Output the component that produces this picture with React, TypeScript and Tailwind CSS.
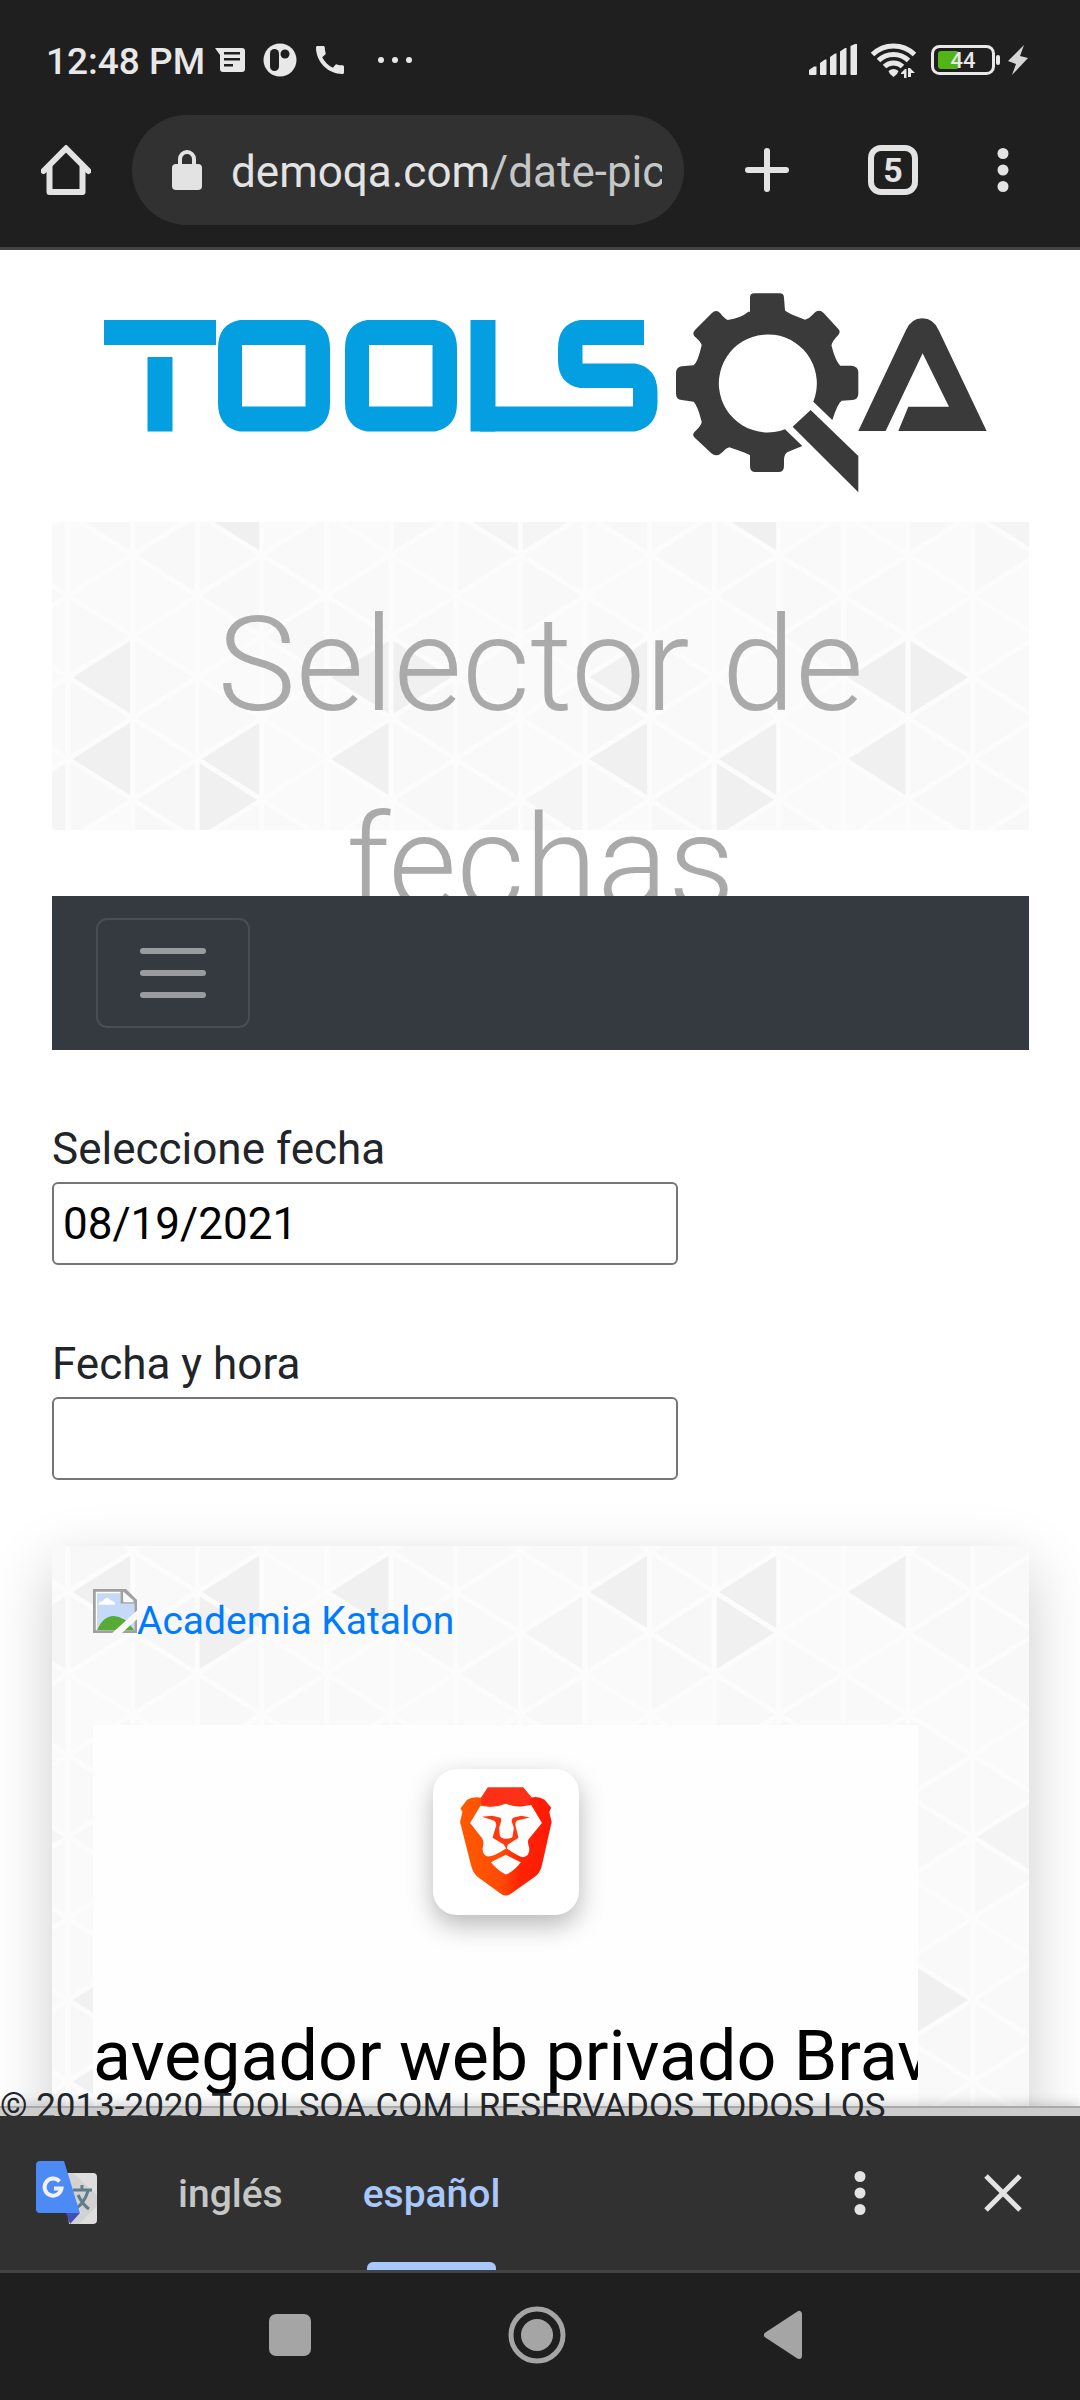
import { useId, type ReactNode } from "react";

const COL = 64.625;
const ROW = 40.8;
const COLS = 8;
const ROWS = 12;

const SHADES: Record<string, string> = {
  "0,0": "#f0f0f0",
  "2,0": "#f0f0f0",
  "4,0": "#f0f0f0",
  "2,1": "#f0f0f0",
  "7,1": "#f5f5f5",
  "1,1": "#f7f7f7",
  "2,6": "#f0f0f0",
  "6,6": "#f4f4f4",
  "7,6": "#f5f5f5",
  "4,10": "#f0f0f0",
  "5,10": "#f0f0f0",
  "0,10": "#f1f1f1",
};
const LIGHT = ["#f9f9f9", "#fafafa", "#f8f8f8", "#f9f9f9", "#fafafa"];

/** Triangle mosaic that fills its parent; `top` is where the mosaic's first row starts. */
function TriangleBackdrop({ top }: { top: number }) {
  const id = useId();
  const cells: ReactNode[] = [];
  for (let k = -1; k <= COLS; k++) {
    for (let j = -1; j <= ROWS; j++) {
      const km = (k + COLS) % COLS;
      const jm = (j + ROWS) % ROWS;
      const fill = SHADES[`${km},${jm}`] ?? LIGHT[(km * 3 + jm * 7) % 5];
      const pointsLeft = (km + jm) % 2 === 0;
      const apex = (pointsLeft ? k : k + 1) * COL;
      const base = (pointsLeft ? k + 1 : k) * COL;
      cells.push(
        <polygon
          key={`${k},${j}`}
          points={`${apex},${j * ROW} ${base},${(j - 1) * ROW} ${base},${(j + 1) * ROW}`}
          fill={fill}
          stroke="#fcfcfc"
          strokeWidth="5"
        />,
      );
    }
  }
  return (
    <svg className="absolute inset-0 h-full w-full" aria-hidden="true">
      <defs>
        <pattern id={id} x="16" y={top} width={COL * COLS} height={ROW * ROWS} patternUnits="userSpaceOnUse">
          {cells}
        </pattern>
      </defs>
      <rect width="100%" height="100%" fill={`url(#${id})`} />
    </svg>
  );
}

function StatusBar() {
  return (
    <div className="flex h-[100px] items-center justify-between pt-5 pr-[52px] pl-[46px] text-[#e8e8e8]">
      <div className="flex items-center">
        <span className="mr-[10px] pt-1 text-[37px] leading-[40px] font-medium">12:48 PM</span>
        <svg className="mr-[18px] h-[26px] w-[30px]" viewBox="0 0 30 26" fill="currentColor" aria-hidden="true">
          <path
            fillRule="evenodd"
            d="M0 1h27q3 0 3 3v18q0 3-3 3H8q-3 0-3-3V8zM9 5v2.500h16V5zm0 6v2.500h16V11zm0 6v2.500h9V17z"
          />
        </svg>
        <svg className="mr-[19px] h-[34px] w-[34px]" viewBox="0 0 34 34" aria-hidden="true">
          <circle cx="17" cy="17" r="16.500" fill="currentColor" />
          <rect x="7" y="6" width="9" height="22" rx="4.500" fill="#1f1f1f" />
          <circle cx="22" cy="11" r="4.500" fill="#1f1f1f" />
        </svg>
        <svg className="mr-[33px] h-[28px] w-[28px]" viewBox="3 3 18 18" fill="currentColor" aria-hidden="true">
          <path d="M20.010 15.380c-1.230 0-2.420-.2-3.530-.56a.977.977 0 0 0-1.010.24l-1.570 1.970c-2.830-1.350-5.480-3.900-6.890-6.830l1.950-1.660c.27-.28.350-.67.240-1.020-.37-1.110-.56-2.300-.56-3.530 0-.54-.45-.99-.99-.99H4.190C3.650 3 3 3.240 3 3.990 3 13.280 10.730 21 20.010 21c.71 0 .99-.63.99-1.180v-3.450c0-.54-.45-.99-.99-.99z" />
        </svg>
        <svg className="h-[8px] w-[36px]" viewBox="0 0 36 8" fill="currentColor" aria-hidden="true">
          <circle cx="4" cy="4" r="3" />
          <circle cx="18" cy="4" r="3" />
          <circle cx="32" cy="4" r="3" />
        </svg>
      </div>
      <div className="flex items-center">
        <svg className="mr-[12px] h-[32px] w-[49px]" viewBox="0 0 49 32" fill="currentColor" aria-hidden="true">
          <path d="M0 26l5-3.500h2.500V30q0 1-1 1H1q-1 0-1-1zM11 19l5-3.500h1.500V30q0 1-1 1H12q-1 0-1-1zM21 13l5-3.500h1.500V30q0 1-1 1H22q-1 0-1-1zM31 7.500L36 4h1.500v26q0 1-1 1H32q-1 0-1-1zM41.500 2l4.500-2h2v30q0 1-1 1h-4.500q-1 0-1-1z" />
        </svg>
        <svg className="mr-[13px] h-[36px] w-[48px]" viewBox="0 0 48 36" fill="none" aria-hidden="true">
          <g stroke="currentColor" strokeWidth="5">
            <path d="M2.500 12.500a30 30 0 0 1 42 0" />
            <path d="M8.500 18.500a21.500 21.500 0 0 1 30 0" />
            <path d="M14.500 24.500a13 13 0 0 1 18 0" />
          </g>
          <path
            fill="currentColor"
            d="M18.500 29q5-4 10 0l-1.500 3-3.500 3-3.500-3zM31 31l4-4h1.500v9H34v-4h-3zM38 26h2l5 5h-4v4h-3z"
          />
        </svg>
        <svg className="mr-[7px] h-[32px] w-[70px]" viewBox="0 0 70 32" aria-hidden="true">
          <rect x="1.500" y="2.500" width="61" height="27" rx="7" fill="none" stroke="currentColor" strokeWidth="3" />
          <rect x="7" y="7" width="21" height="18" rx="3" fill="#52b415" />
          <rect x="65" y="11" width="4" height="10" rx="2" fill="currentColor" />
          <text x="32" y="24" textAnchor="middle" fill="currentColor" fontSize="22" fontWeight="500">
            44
          </text>
        </svg>
        <svg className="h-[30px] w-[20px]" viewBox="0 0 20 30" fill="#d6d6d6" aria-hidden="true">
          <path d="M16 0L0 16l8 3-4 11 16-17-8-2z" />
        </svg>
      </div>
    </div>
  );
}

function DotsIcon() {
  return (
    <svg className="h-[44px] w-[12px]" viewBox="0 0 12 44" fill="#e3e3e3" aria-hidden="true">
      <circle cx="6" cy="5.500" r="5.500" />
      <circle cx="6" cy="22" r="5.500" />
      <circle cx="6" cy="38.500" r="5.500" />
    </svg>
  );
}

function BrowserBar() {
  return (
    <div className="flex h-[150px] items-center border-b-[3px] border-[#444] pr-[71px] pb-[7px] pl-[41px] text-[#e3e3e3]">
      <button type="button" aria-label="Inicio" className="mr-[41px] shrink-0">
        <svg className="h-[50px] w-[50px]" viewBox="0 0 50 50" fill="none" stroke="currentColor" strokeWidth="6" strokeLinejoin="round" aria-hidden="true">
          <path d="M2.500 26L25 3.500 47.500 26" strokeLinecap="round" strokeLinejoin="miter" />
          <path d="M8.500 21v26h33V21" />
        </svg>
      </button>
      <button
        type="button"
        aria-label="Dirección de la página"
        className="flex h-[110px] min-w-0 flex-1 items-center rounded-full bg-[#313131] pr-[22px] pl-10"
      >
        <svg className="mr-[29px] h-[40px] w-[30px] shrink-0" viewBox="0 0 30 40" aria-hidden="true">
          <rect y="14" width="30" height="26" rx="4" fill="currentColor" />
          <path d="M8 15V9a7 7 0 0 1 14 0v6" fill="none" stroke="currentColor" strokeWidth="4" />
        </svg>
        <span className="min-w-0 flex-1 overflow-hidden pt-1 text-left text-[44px] leading-[60px] whitespace-nowrap">
          demoqa.com<span className="text-[#c4c7c5]">/date-picker</span>
        </span>
      </button>
      <button type="button" aria-label="Nueva pestaña" className="ml-[61px] shrink-0">
        <svg className="h-[44px] w-[44px]" viewBox="0 0 44 44" stroke="currentColor" strokeWidth="6" strokeLinecap="round" aria-hidden="true">
          <path d="M22 3v38M3 22h38" />
        </svg>
      </button>
      <button
        type="button"
        aria-label="5 pestañas"
        className="ml-[79px] flex h-[50px] w-[50px] shrink-0 items-center justify-center rounded-[13px] border-[6px] border-[#e3e3e3] text-[34px] leading-[34px] font-bold"
      >
        5
      </button>
      <button type="button" aria-label="Más opciones" className="ml-[79px] shrink-0">
        <DotsIcon />
      </button>
    </div>
  );
}

function ToolsQaLogo() {
  return (
    <svg className="block w-full" viewBox="52 250 977 272" role="img" aria-label="TOOLSQA">
      <g fill="#049fe0">
        <rect x="104" y="320" width="112" height="25" />
        <rect x="147.500" y="357" width="25" height="74.500" />
        <rect x="470.500" y="320" width="25" height="111.500" />
      </g>
      <path
        fill="#049fe0"
        fillRule="evenodd"
        d="M240 320h68q22 4 22 28v55q0 24-22 28.500h-68q-22-4-22-28.500v-55q0-24 22-28zM242 345v61.500h63.500V345zM367 320h68q22 4 22 28v55q0 24-22 28.500h-68q-22-4-22-28.500v-55q0-24 22-28zM369 345v61.500h63.500V345z"
      />
      <path
        fill="#049fe0"
        d="M644 320v25h-61.500v18.500H635q22.500 4 22.500 29v10q0 24-22.500 29H480v-25h153V388h-53q-22-4-22-28v-12q0-24 22-28z"
      />
      <g transform="translate(640 260) scale(0.3333)" fill="#3a3a3a">
        <path d="M330 155V113q0-13 13-13h76q13 0 13 13l3 38q5 8 60 28 12-2 22-14 18-22 34-6l44 48q8 8 0 18-22 22-20 34 12 46 26 58h34q20 2 20 20v64q0 18-18 19l-32 2q-12 8-28 58l-57-55A147 147 0 1 0 435 508l52 50-44 18q-10 6-11 22v20q0 18-16 18h-70q-16 0-16-18v-32q-8-6-62-24-10 2-20 14-18 18-34 4l-48-45q-12-10-2-20 22-20 21-30-12-48-24-60l-36-5q-17-2-17-19v-62q0-17 17-20l36-3q12-8 24-60 0-8-20-26-10-8 0-20l50-50q14-14 26 0 12 16 22 20 40-6 62-25zM512 450l143 138v109L458 500z" />
        <path d="M655 513L797 212q16-37 50-37t50 37l143 301H775l30-73h122l-79-160-111 233z" />
      </g>
    </svg>
  );
}

function BrokenImageIcon() {
  return (
    <svg className="h-[44px] w-[44px] shrink-0" viewBox="0 0 16 16" aria-hidden="true">
      <path d="M0 0h12l4 4v12H0z" fill="#a0a0a0" />
      <path d="M1 1h9.500L15 5v10H1z" fill="#fff" />
      <path d="M1.500 1.500H10V5h5v10H1.500z" fill="#c6d9f7" />
      <path d="M2 5.700q.4-1.400 1.500-1.200Q5 2 6.500 4.200q1.700.2 1.500 1.500z" fill="#fff" />
      <path d="M1.500 15q2-5 6-5.200 4 0 7.500 5.200z" fill="#55ab35" />
      <path d="M10.500.5v4.300h5" fill="#f5f5f5" stroke="#a0a0a0" />
      <path d="M11 1l4 3.800h-4z" fill="#f9f9f9" />
      <path d="M16 7.800L7 16h3.500L16 11z" fill="#f9f9f9" />
    </svg>
  );
}

function BraveIcon() {
  return (
    <svg className="h-[146px] w-[146px]" viewBox="98 86 437 437" aria-hidden="true">
      <defs>
        <linearGradient id="brave-fill" x1="0" x2="1">
          <stop offset="0" stopColor="#ff5a00" />
          <stop offset="0.450" stopColor="#ff4a05" />
          <stop offset="0.650" stopColor="#ff2404" />
          <stop offset="1" stopColor="#ff1a06" />
        </linearGradient>
      </defs>
      <path
        fill="url(#brave-fill)"
        d="M262 141h106l25 30q20-5 39 7l20 24-6 12 7 31-28 125q-5 25-20 37l-75 53q-14 10-28 0l-72-52q-13-13-18-33L179 245l7-31-6-10 20-26q20-10 42-6z"
      />
      <path fill="#ff3018" d="M262 141h106l25 30-14 25-63-7-40 9-34-5 0-21z" />
      <path
        fill="#fff"
        d="M240 196l28 4q24 0 48-10 24 10 46 8l30-4 32 54-40 48q-4 9 2 26 2 26-18 28-16-2-50-27-38 25-56 25-18-4-15-28 5-15-2-27l-36-45z"
      />
      <path
        fill="#fe3a10"
        d="M244 229l31-3 25 6q4 4 0 18l-4 12 2 23q2 8 18 10 20-1 20-7l4-26-6-17q-2-11 6-14l22-5 26 5-38 9q-7 4-5 16l9 36-32 20-4 14-8-14-34-20 11-36q1-12-7-16z"
      />
      <path fill="#fff" d="M316 343l45 22q-21 27-45 37-24-12-45-37z" />
    </svg>
  );
}

function TranslateIcon() {
  return (
    <svg className="h-[64px] w-[62px]" viewBox="0 0 62 64" aria-hidden="true">
      <path d="M28 12h29q4 0 4 4v43q0 4-4 4H33z" fill="#dedede" />
      <path d="M31 12l14 40-12 11h10L61 45V34L37 12z" fill="#d2d2d2" />
      <path d="M30 52h14L34 63z" fill="#4150b5" />
      <path d="M37 29h19M46 24v5M52 30q-4 13-13 18M42 34q5 10 11 14" fill="none" stroke="#607d8b" strokeWidth="3" />
      <path d="M4 0h24l16 52H4q-4 0-4-4V4q0-4 4-4z" fill="#4c8bf5" />
      <path d="M23.500 20.500a8.500 8.500 0 1 0 2 7H18" fill="none" stroke="#f1f1f1" strokeWidth="4" />
    </svg>
  );
}

function TranslateBar() {
  return (
    <div className="flex h-[157px] items-center border-b-[3px] border-[#444] bg-[#313131] pr-[71px] pl-9 text-[39px] font-medium">
      <TranslateIcon />
      <div role="tablist" className="ml-11 flex h-full flex-1">
        <button type="button" role="tab" aria-selected="false" className="h-full px-9 pt-[3px] text-[#c4c7c5]">
          inglés
        </button>
        <button type="button" role="tab" aria-selected="true" className="relative ml-2 h-full px-9 pt-[3px] text-[#a8c7fa]">
          español
          <span className="absolute inset-x-10 bottom-0 h-2 rounded-t-[6px] bg-[#a8c7fa]" />
        </button>
      </div>
      <button type="button" aria-label="Opciones de traducción" className="mr-[117px]">
        <DotsIcon />
      </button>
      <button type="button" aria-label="Cerrar" className="-mr-[14px]">
        <svg className="h-[40px] w-[40px]" viewBox="0 0 40 40" stroke="#e3e3e3" strokeWidth="5" aria-hidden="true">
          <path d="M3 3l34 34M37 3L3 37" />
        </svg>
      </button>
    </div>
  );
}

function SystemNav() {
  return (
    <nav aria-label="Sistema" className="flex h-[127px] items-center justify-center gap-[197px] bg-[#1f1f1f] pr-[9px] pb-[3px]">
      <button type="button" aria-label="Recientes">
        <span className="block h-[42px] w-[42px] rounded-[7px] bg-[#a5a5a5]" />
      </button>
      <button type="button" aria-label="Pantalla de inicio">
        <svg className="h-[58px] w-[58px]" viewBox="0 0 58 58" aria-hidden="true">
          <circle cx="29" cy="29" r="26" fill="none" stroke="#a5a5a5" strokeWidth="5" />
          <circle cx="29" cy="29" r="16" fill="#a5a5a5" />
        </svg>
      </button>
      <button type="button" aria-label="Atrás">
        <svg className="h-[50px] w-[40px]" viewBox="0 0 40 50" fill="#a5a5a5" stroke="#a5a5a5" strokeWidth="6" strokeLinejoin="round" aria-hidden="true">
          <path d="M4 25L36 4v42z" />
        </svg>
      </button>
    </nav>
  );
}

function DateField({ id, label, value }: { id: string; label: string; value: string }) {
  return (
    <div className="mb-[66px]">
      <label htmlFor={id} className="block leading-[66px]">
        {label}
      </label>
      <input
        id={id}
        type="text"
        defaultValue={value}
        className="block h-[83px] w-[626px] max-w-full rounded-[6px] border-2 border-[#767676] bg-white px-[9px] text-black"
      />
    </div>
  );
}

export default function App() {
  return (
    <div className="flex h-screen flex-col bg-white font-[Roboto,sans-serif]">
      <header className="shrink-0 bg-[#1f1f1f]">
        <StatusBar />
        <BrowserBar />
      </header>

      <main className="relative min-h-0 flex-1 overflow-hidden pr-[51px] pl-[52px] text-[44px] text-[#212529]">
        <ToolsQaLogo />
        <div className="relative mb-[66px] h-[308px]">
          <TriangleBackdrop top={237} />
          <h1 className="relative pt-11 text-center text-[132px] leading-[198px] font-light text-[#aaa]">
            Selector de fechas
          </h1>
        </div>
        <nav className="relative mb-[66px] bg-[#353a40] px-11 py-[22px]">
          <button
            type="button"
            aria-label="Menú"
            className="flex h-[110px] w-[154px] flex-col items-center justify-center gap-4 rounded-[11px] border-2 border-[#4a4e53]"
          >
            <span className="h-[6px] w-[66px] rounded-full bg-[#999c9f]" />
            <span className="h-[6px] w-[66px] rounded-full bg-[#999c9f]" />
            <span className="h-[6px] w-[66px] rounded-full bg-[#999c9f]" />
          </button>
        </nav>

        <form>
          <DateField id="date" label="Seleccione fecha" value="08/19/2021" />
          <DateField id="date-time" label="Fecha y hora" value="" />
        </form>

        <aside className="relative min-h-[700px] px-[41px] pt-[41px] shadow-[0_22px_60px_rgba(0,0,0,0.2)]">
          <TriangleBackdrop top={46} />
          <a href="#katalon" className="relative flex h-[138px] items-start text-[39px] leading-[68px] text-[#007bff]">
            <span className="mt-[2px]">
              <BrokenImageIcon />
            </span>
            Academia Katalon
          </a>
          <section className="relative flex h-[640px] max-w-[825px] flex-col items-center overflow-hidden bg-[#fefefe] pt-[44px]">
            <div className="rounded-[24px] bg-white shadow-[0_10px_26px_rgba(0,0,0,0.28)]">
              <BraveIcon />
            </div>
            <h2 className="mt-[101px] text-[70px] leading-[80px] whitespace-nowrap text-black">
              Navegador web privado Brave
            </h2>
          </section>
        </aside>

        <footer className="absolute inset-x-0 bottom-0 h-[28px]">
          <div className="absolute inset-x-0 bottom-0 h-[10px] border-t-2 border-[#aaa] bg-[#ccc] shadow-[0_-2px_12px_rgba(0,0,0,0.2)]" />
          <p className="relative text-[35px] leading-[38px] whitespace-nowrap">
            © 2013-2020 TOOLSQA.COM | RESERVADOS TODOS LOS
          </p>
        </footer>
      </main>

      <div className="shrink-0">
        <TranslateBar />
        <SystemNav />
      </div>
    </div>
  );
}
